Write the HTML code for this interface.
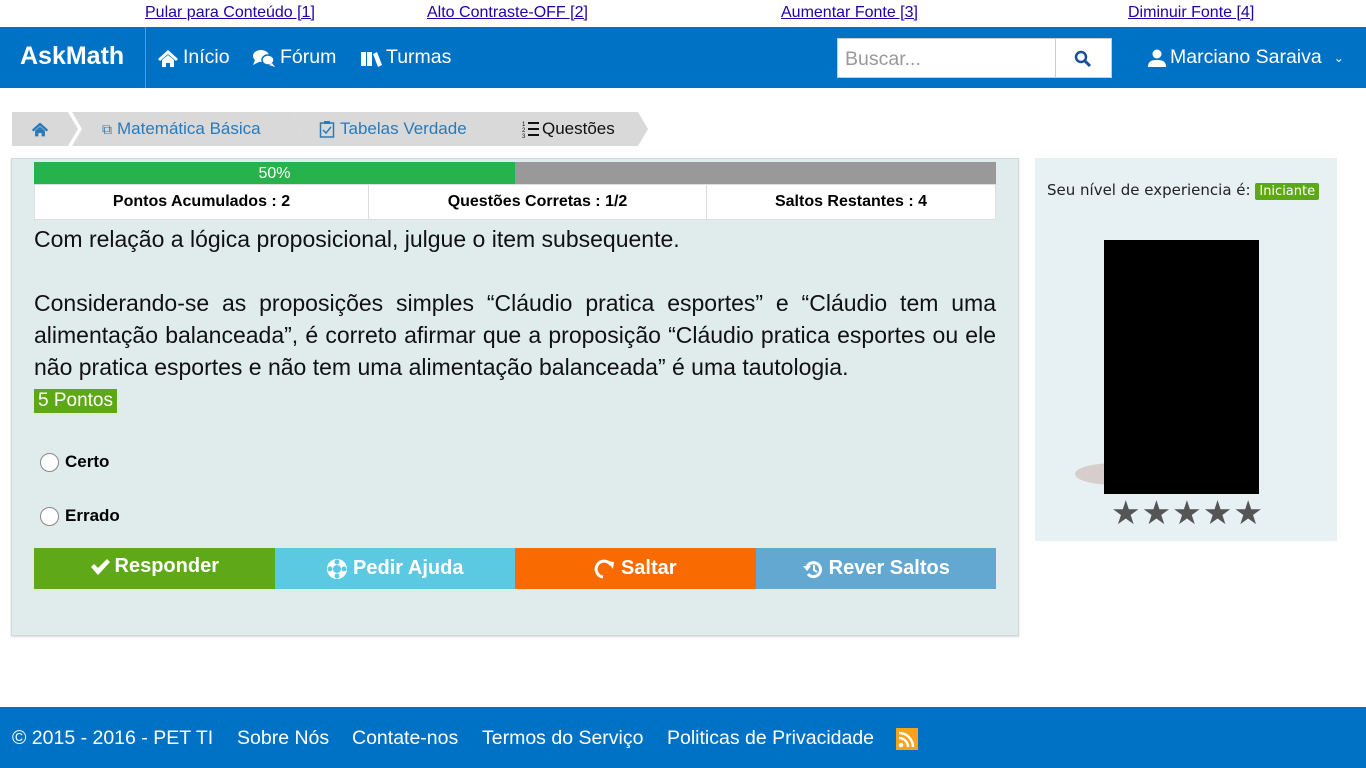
<!DOCTYPE html>
<html><head><meta charset="utf-8"><style>
*{box-sizing:border-box;margin:0;padding:0}
body{width:1366px;height:768px;position:relative;background:#fff;font-family:"Liberation Sans",sans-serif;overflow:hidden}
.top a{position:absolute;top:4px;font-size:16px;text-decoration:underline;color:#2200aa}
.nav{position:absolute;top:27px;left:0;width:1366px;height:61px;background:#0072c6;color:#fff}
.nav .brand{position:absolute;left:20px;top:15px;font-size:25px;font-weight:bold}
.nav .sep{position:absolute;left:145px;top:0;width:1px;height:61px;background:#4d9ad8}
.nav .it{position:absolute;top:19px;font-size:19.5px;display:flex;align-items:center;gap:4px}
.search{position:absolute;left:837px;top:11px;width:275px;height:40px;background:#fff;border:1px solid #ccc}
.search span{position:absolute;left:7px;top:9px;color:#999;font-size:19.5px}
.search .b{position:absolute;left:217px;top:0;width:1px;height:38px;background:#ccc}
.bc{position:absolute;top:112px;left:12px;height:34px}
.bc div{position:absolute;top:0;height:34px;background:#d9d9d9;font-size:17px;color:#2a7ab8;display:flex;align-items:center;gap:5px;clip-path:polygon(0 0,calc(100% - 10px) 0,100% 50%,calc(100% - 10px) 100%,0 100%,10px 50%)}
.panel{position:absolute;left:11px;top:158px;width:1008px;height:478px;background:#e0ebec;border:1px solid #d0d8da;box-shadow:0 1px 2px rgba(0,0,0,.15)}
.prog{position:absolute;left:22px;top:3px;width:962px;height:22px;background:#999}
.prog div{width:481px;height:22px;background:#26b34b;color:#fff;text-align:center;font-size:16px;line-height:24px}
.stats{position:absolute;left:22px;top:25px;width:962px;height:36px;background:#fff;border:1px solid #ddd;display:flex}
.stats div{font-weight:bold;font-size:16px;text-align:center;line-height:34px;border-right:1px solid #ddd}
.q{position:absolute;left:22px;top:64px;width:962px;font-size:23px;line-height:32px;color:#111;text-align:justify}
.pts{position:absolute;left:22px;top:230px;background:#5da915;color:#fff;font-size:19px;padding:0 4px;height:24px;line-height:24px}
.opt{position:absolute;left:28px;font-weight:bold;font-size:17px;display:flex;align-items:center;gap:6px}
.opt i{width:19px;height:19px;border-radius:50%;border:1px solid #888;background:#fff;display:inline-block}
.btns{position:absolute;left:22px;top:389px;width:962px;height:41px;display:flex}
.btns div{flex:1;color:#fff;font-weight:bold;font-size:20px;display:flex;align-items:center;justify-content:center;gap:5px}
.side{position:absolute;left:1035px;top:158px;width:302px;height:383px;background:#e7f1f4}
.foot{position:absolute;top:707px;left:0;width:1366px;height:61px;background:#0072c6;color:#fff;font-size:19.5px}
.foot span{position:absolute;top:20px}
</style></head><body>
<div class="top"><a style="left:145px">Pular para Conteúdo [1]</a><a style="left:427px">Alto Contraste-OFF [2]</a><a style="left:781px">Aumentar Fonte [3]</a><a style="left:1128px">Diminuir Fonte [4]</a></div>
<div class="nav">
<div class="brand">AskMath</div><div class="sep"></div>
<div class="it" style="left:157px"><svg width="22" height="18" viewBox="0 0 22 18"><path d="M11 1 1 10l2 2 8-7 8 7 2-2z M5 11v7h4v-4h4v4h4v-7l-6-5z" fill="#fff"/></svg>Início</div>
<div class="it" style="left:252px"><svg width="24" height="20" viewBox="0 0 24 20"><ellipse cx="9" cy="8" rx="8" ry="6" fill="#fff"/><path d="M3 12 1 17l6-3z" fill="#fff"/><ellipse cx="16" cy="12" rx="6" ry="5" fill="#fff" stroke="#0072c6" stroke-width="1.5"/><path d="M20 15l3 4-6-2z" fill="#fff"/></svg>Fórum</div>
<div class="it" style="left:360px"><svg width="22" height="18" viewBox="0 0 22 18"><rect x="1" y="3" width="5" height="14" fill="#fff"/><rect x="7" y="3" width="5" height="14" fill="#fff"/><path d="M13 5l4-2 5 13-4 2z" fill="#fff"/></svg>Turmas</div>
<div class="search"><span>Buscar...</span><div class="b"></div><svg style="position:absolute;left:236px;top:11px" width="18" height="18" viewBox="0 0 18 18"><circle cx="7" cy="7" r="5" fill="none" stroke="#1a4f9c" stroke-width="2.5"/><path d="M11 11l5 5" stroke="#1a4f9c" stroke-width="3"/></svg></div>
<div class="it" style="left:1148px"><svg width="18" height="18" viewBox="0 0 18 18"><circle cx="9" cy="5" r="4.5" fill="#fff"/><path d="M0 18c0-6 4-7 9-7s9 1 9 7z" fill="#fff"/></svg>Marciano Saraiva <span style="font-size:12px;margin-left:8px">&#8964;</span></div>
</div>
<div class="bc">
<div style="left:0;width:66px;clip-path:polygon(0 0,56px 0,66px 50%,56px 100%,0 100%);justify-content:center;padding-right:10px"><svg width="18" height="16" viewBox="0 0 22 18"><path d="M11 1 1 10l2 2 8-7 8 7 2-2z M5 11v7h4v-4h4v4h4v-7l-6-5z" fill="#2a7ab8"/></svg></div>
<div style="left:60px;width:230px;padding-left:30px"><span style="font-size:14px">&#10697;</span> Matemática Básica</div>
<div style="left:280px;width:215px;padding-left:27px"><svg width="16" height="18" viewBox="0 0 16 18"><rect x="1.5" y="3" width="13" height="14" fill="none" stroke="#2a7ab8" stroke-width="1.5"/><rect x="5" y="1" width="6" height="3" fill="#2a7ab8"/><path d="M4 10l3 3 5-6" fill="none" stroke="#2a7ab8" stroke-width="1.5"/></svg>Tabelas Verdade</div>
<div style="left:482px;width:154px;padding-left:28px;color:#111;gap:2px"><svg width="18" height="18" viewBox="0 0 18 18"><path d="M6 3h11M6 9h11M6 15h11" stroke="#111" stroke-width="2"/><text x="0" y="6" font-size="6" fill="#111">1</text><text x="0" y="12" font-size="6" fill="#111">2</text><text x="0" y="18" font-size="6" fill="#111">3</text></svg>Questões</div>
</div>
<div class="panel">
<div class="prog"><div>50%</div></div>
<div class="stats"><div style="width:334px">Pontos Acumulados : 2</div><div style="width:338px">Questões Corretas : 1/2</div><div style="width:288px;border:0">Saltos Restantes : 4</div></div>
<div class="q">Com relação a lógica proposicional, julgue o item subsequente.<br><br>Considerando-se as proposições simples “Cláudio pratica esportes” e “Cláudio tem uma alimentação balanceada”, é correto afirmar que a proposição “Cláudio pratica esportes ou ele não pratica esportes e não tem uma alimentação balanceada” é uma tautologia.</div>
<div class="pts">5 Pontos</div>
<div class="opt" style="top:293px"><i></i>Certo</div>
<div class="opt" style="top:347px"><i></i>Errado</div>
<div class="btns">
<div style="background:#5fa919;padding-bottom:4px"><svg width="20" height="18" viewBox="0 0 20 18"><path d="M1 9l3-3 4 4 9-9 3 3-12 13z" fill="#fff"/></svg>Responder</div>
<div style="background:#5bc9e1"><svg width="22" height="22" viewBox="0 0 22 22"><circle cx="11" cy="11" r="10" fill="#fff"/><circle cx="11" cy="11" r="4" fill="#5bc9e1"/><circle cx="11" cy="4" r="2.5" fill="#5bc9e1"/><circle cx="11" cy="18" r="2.5" fill="#5bc9e1"/><circle cx="4" cy="11" r="2.5" fill="#5bc9e1"/><circle cx="18" cy="11" r="2.5" fill="#5bc9e1"/></svg>Pedir Ajuda</div>
<div style="background:#f96a00"><svg width="22" height="22" viewBox="0 0 22 22"><path d="M17 7A8 8 0 1 0 9 19" fill="none" stroke="#fff" stroke-width="3"/><path d="M13 3l7 1-1 7z" fill="#fff"/></svg>Saltar</div>
<div style="background:#63a8d0"><svg width="22" height="22" viewBox="0 0 22 22"><path d="M5 9a7 7 0 1 1 1 7" fill="none" stroke="#fff" stroke-width="3"/><path d="M1 8h8l-4 5z" fill="#fff"/><path d="M12 7v5l3 2" fill="none" stroke="#fff" stroke-width="2"/></svg>Rever Saltos</div>
</div>
</div>
<div class="side">
<div style="position:absolute;left:12px;top:23px;font-family:'DejaVu Sans',sans-serif;font-size:15px;color:#222">Seu nível de experiencia é: <span style="background:#5da915;color:#fff;font-size:13px;padding:1px 4px;border-radius:2px">Iniciante</span></div>
<div style="position:absolute;left:40px;top:305px;width:80px;height:22px;border-radius:50%;background:#d6cdcc"></div>
<div style="position:absolute;left:69px;top:82px;width:155px;height:254px;background:#000"></div>
<div style="position:absolute;left:76px;top:337px;font-size:33px;color:#555;letter-spacing:1px;line-height:36px">★★★★★</div>
</div>
<div class="foot"><span style="left:12px">© 2015 - 2016 - PET TI</span><span style="left:237px">Sobre Nós</span><span style="left:352px">Contate-nos</span><span style="left:482px">Termos do Serviço</span><span style="left:667px">Politicas de Privacidade</span>
<svg style="position:absolute;left:896px;top:21px" width="22" height="22" viewBox="0 0 22 22"><rect width="22" height="22" fill="#f8a21a"/><circle cx="5" cy="17" r="2.3" fill="#fff"/><path d="M3 10a9 9 0 0 1 9 9M3 5a14 14 0 0 1 14 14" fill="none" stroke="#fff" stroke-width="2.5"/></svg></div>
</body></html>
